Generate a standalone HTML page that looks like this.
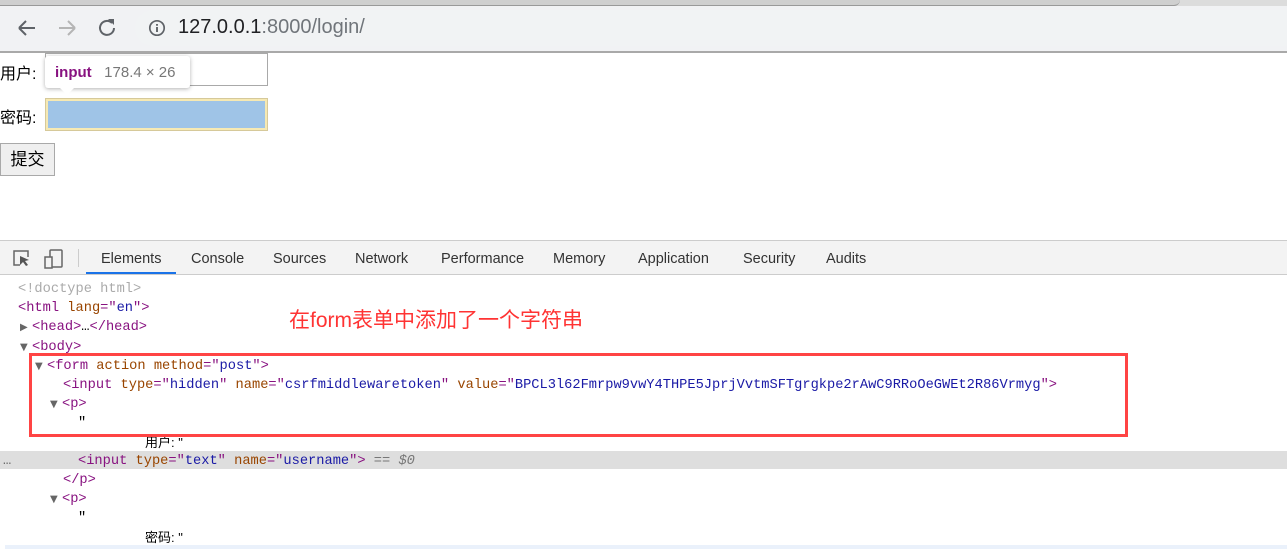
<!DOCTYPE html><html><head><meta charset="utf-8"><style>
*{margin:0;padding:0;box-sizing:border-box}
body{width:1287px;height:549px;overflow:hidden;background:#fff;position:relative;font-family:"Liberation Sans","Noto Sans CJK SC",sans-serif}
.a{position:absolute;white-space:pre}
.m{font-family:"Liberation Mono","DejaVu Sans Mono",monospace;font-size:13.7px;line-height:19px}
.t{color:#881280}.at{color:#994500}.v{color:#1a1aa6}.g{color:#aaa}
.tr{color:#666;font-size:10px;font-family:"DejaVu Sans",sans-serif;display:inline-block;width:12px}
.tab{position:absolute;top:251px;font-size:14.5px;color:#333}
</style></head><body>
<div class="a" style="left:0;top:0;width:1287px;height:6px;background:#dcdcdc"></div>
<div class="a" style="left:0;top:0;width:1180px;height:6px;background:#cfcfcf;border-bottom:1px solid #999;border-radius:0 0 8px 0"></div>
<div class="a" style="left:0;top:6px;width:1287px;height:46px;background:#f1f2f4"></div>
<div class="a" style="left:0;top:51px;width:1287px;height:2px;background:#a9a9a9"></div>
<div class="a" style="left:135px;top:10px;width:1152px;height:36px;background:#f1f3f4;border-radius:18px 0 0 18px"></div>
<svg class="a" style="left:16px;top:17px" width="100" height="22" viewBox="0 0 100 22"><path d="M3 11h16M3 11l7-7M3 11l7 7" stroke="#5f6368" stroke-width="2" fill="none"/><path d="M43 11h16M59 11l-7-7M59 11l-7 7" stroke="#b5b5b5" stroke-width="2" fill="none"/><path d="M98 11a7 7 0 1 1-2-5" stroke="#5f6368" stroke-width="2" fill="none"/><path d="M92 2h6v6z" fill="#5f6368"/></svg>
<svg class="a" style="left:148px;top:19px" width="18" height="18"><circle cx="9" cy="9" r="7.2" stroke="#5f6368" stroke-width="1.7" fill="none"/><path d="M9 8v5M9 5v1.8" stroke="#5f6368" stroke-width="1.9"/></svg>
<div class="a" style="left:178px;top:16px;font-size:20px;color:#202124">127.0.0.1<span style="color:#70757a">:8000/login/</span></div>

<div class="a" style="left:0;top:60px;font-size:16px;color:#000">用户:</div>
<div class="a" style="left:45px;top:53px;width:223px;height:33px;border:1px solid #a9a9a9"></div>
<div class="a" style="left:0;top:104px;font-size:16px;color:#000">密码:</div>
<div class="a" style="left:45px;top:98px;width:223px;height:33px;background:#f6e9b3;border:1px solid #d6c99a"></div>
<div class="a" style="left:48px;top:101px;width:217px;height:27px;background:#9fc4e7"></div>
<div class="a" style="left:0;top:143px;width:55px;height:33px;background:#efefef;border:1px solid #a9a9a9;font-size:17px;text-align:center;line-height:31px">提交</div>
<div class="a" style="left:45px;top:56px;width:145px;height:32px;background:#fff;border-radius:3px;box-shadow:0 1px 4px rgba(0,0,0,.3)"></div>
<div class="a" style="left:59px;top:87px;width:0;height:0;border-left:8px solid transparent;border-right:8px solid transparent;border-top:8px solid #fff"></div>
<div class="a" style="left:55px;top:64px;font-size:15px"><b style="color:#881280">input</b>&nbsp;&nbsp;&nbsp;<span style="color:#777">178.4 × 26</span></div>

<div class="a" style="left:0;top:240px;width:1287px;height:35px;background:#f3f3f3;border-top:1px solid #ccc;border-bottom:1px solid #ccc"></div>
<svg class="a" style="left:12px;top:249px" width="56" height="20"><path d="M8 16H2V2h14v6" stroke="#666" stroke-width="1.5" fill="none"/><path d="M8 7l9 4-4 1 3 4-2 1-3-4-3 3z" fill="#555"/><rect x="38" y="1" width="12" height="17" rx="1" stroke="#666" stroke-width="1.5" fill="none"/><rect x="33" y="8" width="7" height="11" stroke="#666" stroke-width="1.5" fill="#f3f3f3"/></svg>
<div class="a" style="left:78px;top:249px;width:1px;height:18px;background:#ccc"></div>
<div class="tab" style="left:101px">Elements</div>
<div class="a" style="left:86px;top:272px;width:90px;height:2px;background:#1a73e8"></div>
<div class="tab" style="left:191px">Console</div>
<div class="tab" style="left:273px">Sources</div>
<div class="tab" style="left:355px">Network</div>
<div class="tab" style="left:441px">Performance</div>
<div class="tab" style="left:553px">Memory</div>
<div class="tab" style="left:638px">Application</div>
<div class="tab" style="left:743px">Security</div>
<div class="tab" style="left:826px">Audits</div>

<div class="a" style="left:0;top:451px;width:1287px;height:18px;background:#dedede"></div>
<div class="a m g" style="left:18px;top:280px">&lt;!doctype html&gt;</div>
<div class="a m" style="left:18px;top:299px"><span class="t">&lt;html</span> <span class="at">lang</span><span class="t">="</span><span class="v">en</span><span class="t">"&gt;</span></div>
<div class="a m" style="left:20px;top:318px"><span class="tr">▶</span><span class="t">&lt;head&gt;</span>…<span class="t">&lt;/head&gt;</span></div>
<div class="a m" style="left:20px;top:338px"><span class="tr">▼</span><span class="t">&lt;body&gt;</span></div>
<div class="a m" style="left:35px;top:357px"><span class="tr">▼</span><span class="t">&lt;form</span> <span class="at">action</span> <span class="at">method</span><span class="t">="</span><span class="v">post</span><span class="t">"&gt;</span></div>
<div class="a m" style="left:63px;top:376px"><span class="t">&lt;input</span> <span class="at">type</span><span class="t">="</span><span class="v">hidden</span><span class="t">"</span> <span class="at">name</span><span class="t">="</span><span class="v">csrfmiddlewaretoken</span><span class="t">"</span> <span class="at">value</span><span class="t">="</span><span class="v">BPCL3l62Fmrpw9vwY4THPE5JprjVvtmSFTgrgkpe2rAwC9RRoOeGWEt2R86Vrmyg</span><span class="t">"&gt;</span></div>
<div class="a m" style="left:50px;top:395px"><span class="tr">▼</span><span class="t">&lt;p&gt;</span></div>
<div class="a m" style="left:78px;top:414px">"</div>
<div class="a" style="left:145px;top:432px;font-size:13px">用户: "</div>
<div class="a m" style="left:3px;top:452px;color:#666">…</div>
<div class="a m" style="left:78px;top:452px"><span class="t">&lt;input</span> <span class="at">type</span><span class="t">="</span><span class="v">text</span><span class="t">"</span> <span class="at">name</span><span class="t">="</span><span class="v">username</span><span class="t">"&gt;</span> <span style="color:#777">== <i>$0</i></span></div>
<div class="a m t" style="left:63px;top:471px">&lt;/p&gt;</div>
<div class="a m" style="left:50px;top:490px"><span class="tr">▼</span><span class="t">&lt;p&gt;</span></div>
<div class="a m" style="left:78px;top:509px">"</div>
<div class="a" style="left:145px;top:527px;font-size:13px">密码: "</div>
<div class="a" style="left:5px;top:545px;width:1282px;height:4px;background:#eaf1fb"></div>

<div class="a" style="left:29px;top:353px;width:1099px;height:84px;border:3px solid #f44"></div>
<div class="a" style="left:289px;top:304px;font-size:21px;color:#f33">在form表单中添加了一个字符串</div>
</body></html>
